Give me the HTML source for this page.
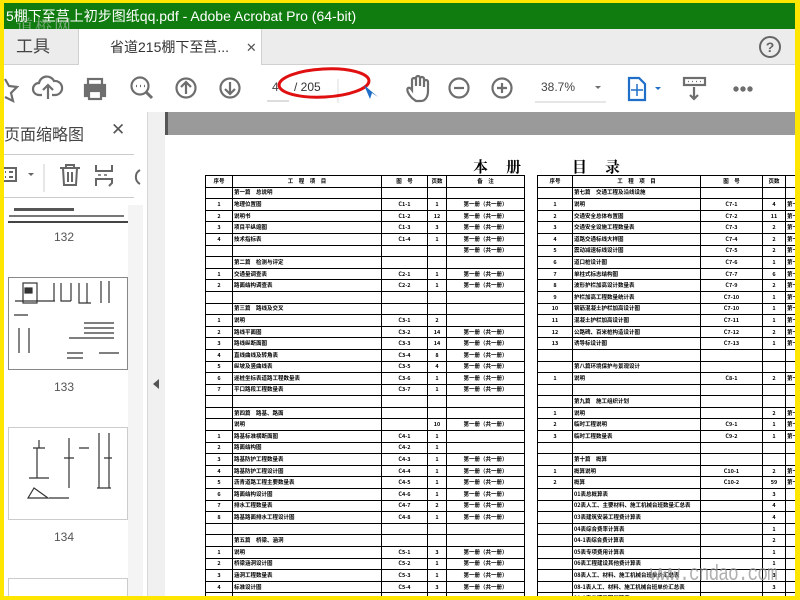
<!DOCTYPE html>
<html><head><meta charset="utf-8"><style>
*{margin:0;padding:0;box-sizing:border-box}
body{width:800px;height:600px;overflow:hidden;background:#ffe600;position:relative;font-family:"Liberation Sans","Noto Sans CJK SC",sans-serif}
.abs{position:absolute}
#title{left:4px;top:3px;width:791px;height:26px;background:#107c10;color:#fff;font-size:14px;line-height:26px;padding-left:2px;white-space:nowrap;overflow:hidden}
#tabs{left:4px;top:29px;width:791px;height:36px;background:#ececec;border-bottom:1px solid #d0d0d0}
#tb{left:4px;top:65px;width:791px;height:47px;background:#fff}
#panel{left:4px;top:112px;width:144px;height:484px;background:#fff;border-right:1px solid #d8d8d8;overflow:hidden}
#gut{left:148px;top:112px;width:17px;height:484px;background:#f0f0f0}
#doc{left:165px;top:112px;width:630px;height:484px;background:#fff;overflow:hidden}
table{border-collapse:collapse;position:absolute;table-layout:fixed;font-family:"Noto Sans CJK SC","Liberation Serif",sans-serif}
td{border:1px solid #000;height:11.6px;font-size:5.5px;line-height:9px;padding:0 1px;white-space:nowrap;overflow:hidden;color:#000;font-weight:bold}
td.c{text-align:center}
tr.h td{text-align:center;font-weight:bold}
svg{position:absolute}
</style></head><body>
<div id="title" class="abs">5棚下至莒上初步图纸qq.pdf - Adobe Acrobat Pro (64-bit)</div>
<div class="abs" style="left:16px;top:12px;color:rgba(200,200,200,.6);font-size:17px;font-family:'Noto Serif CJK SC',serif;letter-spacing:2px">道桥网</div>
<div id="tabs" class="abs">
 <div class="abs" style="left:0;top:0;width:74px;height:36px;font-size:17px;line-height:36px;color:#444;padding-left:12px">工具</div>
 <div class="abs" style="left:74px;top:0;width:184px;height:37px;background:#fff;border-left:1px solid #d0d0d0;border-right:1px solid #d0d0d0;font-size:14px;line-height:36px;color:#333;padding-left:31px">省道215棚下至莒... <span style="margin-left:13px;font-size:13px;color:#555">✕</span></div>
 <div class="abs" style="left:755px;top:7px;width:22px;height:22px;border:2px solid #666;border-radius:50%;text-align:center;font-size:14px;line-height:18px;font-weight:bold;color:#666">?</div>
</div>
<div id="tb" class="abs">
<svg width="791" height="47" fill="none" stroke="#6e6e6e" stroke-width="2.2">
 <path d="M1 14 L5 21 L13 22 L7 28 L9 36 L1 32" />
 <path d="M38 30 h-3 a6 6 0 0 1 0-12 a8 8 0 0 1 15-2 a6 6 0 0 1 2 14 h-4 M44 34 V20 M39 25 l5-5 5 5"/>
 <rect x="84" y="14" width="14" height="6" /><rect x="81" y="20" width="20" height="11" fill="#6e6e6e"/><rect x="85" y="26" width="12" height="8" fill="#fff"/>
 <circle cx="136" cy="21" r="8.5"/><path d="M142 27 l6 6" stroke-width="3"/><path d="M132 21h1 M136 21h1 M140 21h1"/>
 <circle cx="182" cy="23" r="9.5"/><path d="M182 29 V17 M177 22 l5-5 5 5"/>
 <circle cx="226" cy="23" r="9.5"/><path d="M226 17 V29 M221 24 l5 5 5-5"/>
 <path d="M263 36 h22" stroke="#bbb" stroke-width="1"/><path d="M334 14 v24" stroke="#ddd" stroke-width="1"/>
 <path d="M408 33 c-3-3-6-8-4-10 2-1 4 2 4 2 V15 a2 2 0 0 1 4 0 v6 V13 a2 2 0 0 1 4 0 v8 V14 a2 2 0 0 1 4 0 v8 V17 a2 2 0 0 1 4 0 v9 c0 6-3 10-7 10 h-5 z"/>
 <circle cx="455" cy="23" r="9.5"/><path d="M450 23 h10"/>
 <circle cx="498" cy="23" r="9.5"/><path d="M493 23 h10 M498 18 v10"/>
 <path d="M531 37 h71" stroke="#ccc" stroke-width="1"/><path d="M591 21 l3 3 3-3z" fill="#6e6e6e" stroke="none"/>
 <path d="M625 13 h10 l6 6 v16 h-16 z" stroke="#1f6fc8"/><path d="M633 19 v12 M627 25 h12" stroke="#1f6fc8" stroke-width="1.5"/><path d="M651 22 l3 3 3-3z" fill="#1f6fc8" stroke="none"/>
 <rect x="680" y="13" width="21" height="7"/><path d="M690 22 v12 M686 30 l4 4 4-4"/><path d="M684 16.5h1 M688 16.5h1 M692 16.5h1 M696 16.5h1" stroke-width="1.2"/>
 <circle cx="732" cy="24" r="1.6" fill="#6e6e6e"/><circle cx="739" cy="24" r="1.6" fill="#6e6e6e"/><circle cx="746" cy="24" r="1.6" fill="#6e6e6e"/>
 <ellipse cx="320" cy="18" rx="45" ry="14" stroke="#e01010" stroke-width="3" transform="rotate(-3 320 18)"/>
 <path d="M360 20 l6 14 2-6 6 4z" fill="#1f6fc8" stroke="none"/>
</svg>
 <div class="abs" style="left:268px;top:15px;font-size:12px;color:#444">4</div>
 <div class="abs" style="left:290px;top:15px;font-size:12px;color:#333">/ 205</div>
 <div class="abs" style="left:537px;top:15px;font-size:12px;color:#444">38.7%</div>
</div>
<div id="panel" class="abs">
 <div class="abs" style="left:0;top:9px;font-size:16px;color:#444;white-space:nowrap">页面缩略图</div>
 <div class="abs" style="left:107px;top:8px;font-size:17px;color:#555">✕</div>
 <div class="abs" style="left:0;top:42px;width:130px;height:1px;background:#ccc"></div>
 <svg width="144" height="40" style="top:44px" fill="none" stroke="#666" stroke-width="2">
  <rect x="-4" y="12" width="16" height="13"/><path d="M1 16h1 M1 21h1 M5 16h4 M5 21h4"/><path d="M24 17 l3 3 3-3z" fill="#666" stroke="none"/>
  <path d="M40 8 v28" stroke="#ccc" stroke-width="1"/>
  <path d="M56 12 h20 M62 12 v-3 h8 v3 M59 12 l1 17 h12 l1-17 M64 16 v10 M68 16 v10"/>
  <path d="M92 9 v6 h16 v-6 M92 30 v-7 h16 v4 l-3 3" /><path d="M94 19h3 M100 19h3" stroke-width="1.5"/>
  <path d="M136 14 a8 8 0 0 0 0 14"/>
 </svg>
 <div class="abs" style="left:0;top:85px;width:130px;height:1px;background:#ccc"></div>
 <div class="abs" style="left:124px;top:93px;width:15px;height:400px;background:#f4f4f4"></div>
 <div class="abs" style="left:4px;top:93px;width:120px;height:18px;background:#fff;border-bottom:2px solid #444"><div style="margin:3px 6px;height:3px;width:60px;background:#555"></div><div style="margin:4px 1px;height:2px;width:115px;background:#777"></div></div>
 <div class="abs" style="left:50px;top:118px;font-size:12px;color:#555">132</div>
 <div class="abs" style="left:4px;top:165px;width:120px;height:93px;background:#fff;border:1px solid #888">
  <svg width="118" height="91" stroke="#333" fill="none" stroke-width="1.2"><rect x="14" y="5" width="14" height="20"/><rect x="16" y="10" width="7" height="5" fill="#333"/><path d="M6 23h40 M45 5v18 M52 5v18h10 M62 5v18 M70 5v20h12 M78 5v20 M92 3v22 M100 3v22 M5 37h14 M10 50v25 M20 50v25 M60 60h25 M75 45h30 M75 50h30 M75 55h30 M75 60h30 M58 75h16 M58 80h16 M90 75h20"/></svg>
 </div>
 <div class="abs" style="left:50px;top:268px;font-size:12px;color:#555">133</div>
 <div class="abs" style="left:4px;top:315px;width:120px;height:93px;background:#fff;border:1px solid #ccc">
  <svg width="118" height="91" stroke="#333" fill="none" stroke-width="1.2"><path d="M30 12v8 M24 20h12 M28 20v30 M20 50h20 M25 60l-6 10h20z M40 70h20 M60 10v50 M90 5v55 M100 5v55 M88 60h14 M55 30h10 M95 30h8 M70 20h10"/></svg>
 </div>
 <div class="abs" style="left:50px;top:418px;font-size:12px;color:#555">134</div>
 <div class="abs" style="left:4px;top:466px;width:120px;height:30px;background:#fff;border:1px solid #ccc"></div>
</div>
<div id="gut" class="abs"><div class="abs" style="left:5px;top:267px;width:0;height:0;border-top:5px solid transparent;border-bottom:5px solid transparent;border-right:6px solid #555"></div></div>
<div id="doc" class="abs">
 <div class="abs" style="left:0;top:0;width:630px;height:23px;background:#9a9a9a"></div>
 <div class="abs" style="left:0;top:0;width:3px;height:23px;background:#555"></div>
 <div class="abs" style="left:308px;top:44px;font-size:15px;font-weight:bold;font-family:'Noto Serif CJK SC',serif;letter-spacing:18px;white-space:nowrap">本册　目录</div>
 <table style="left:40px;top:63px;width:319px">
 <colgroup><col style="width:27px"><col style="width:149px"><col style="width:46px"><col style="width:19px"><col style="width:78px"></colgroup>
 <tr class="h"><td>序号</td><td>工　程　项　目</td><td>图　号</td><td>页数</td><td>备　注</td></tr>
 <tr><td></td><td>第一篇　总说明</td><td></td><td></td><td></td></tr>
 <tr><td class="c">1</td><td>地理位置图</td><td class="c">C1-1</td><td class="c">1</td><td class="c">第一册（共一册）</td></tr>
 <tr><td class="c">2</td><td>说明书</td><td class="c">C1-2</td><td class="c">12</td><td class="c">第一册（共一册）</td></tr>
 <tr><td class="c">3</td><td>项目平纵缩图</td><td class="c">C1-3</td><td class="c">3</td><td class="c">第一册（共一册）</td></tr>
 <tr><td class="c">4</td><td>技术指标表</td><td class="c">C1-4</td><td class="c">1</td><td class="c">第一册（共一册）</td></tr>
 <tr><td></td><td></td><td></td><td></td><td class="c">第一册（共一册）</td></tr>
 <tr><td></td><td>第二篇　检测与评定</td><td></td><td></td><td></td></tr>
 <tr><td class="c">1</td><td>交通量调查表</td><td class="c">C2-1</td><td class="c">1</td><td class="c">第一册（共一册）</td></tr>
 <tr><td class="c">2</td><td>路面结构调查表</td><td class="c">C2-2</td><td class="c">1</td><td class="c">第一册（共一册）</td></tr>
 <tr><td></td><td></td><td></td><td></td><td></td></tr>
 <tr><td></td><td>第三篇　路线及交叉</td><td></td><td></td><td></td></tr>
 <tr><td class="c">1</td><td>说明</td><td class="c">C3-1</td><td class="c">2</td><td></td></tr>
 <tr><td class="c">2</td><td>路线平面图</td><td class="c">C3-2</td><td class="c">14</td><td class="c">第一册（共一册）</td></tr>
 <tr><td class="c">3</td><td>路线纵断面图</td><td class="c">C3-3</td><td class="c">14</td><td class="c">第一册（共一册）</td></tr>
 <tr><td class="c">4</td><td>直线曲线及转角表</td><td class="c">C3-4</td><td class="c">8</td><td class="c">第一册（共一册）</td></tr>
 <tr><td class="c">5</td><td>纵坡及竖曲线表</td><td class="c">C3-5</td><td class="c">4</td><td class="c">第一册（共一册）</td></tr>
 <tr><td class="c">6</td><td>逐桩坐标表道路工程数量表</td><td class="c">C3-6</td><td class="c">1</td><td class="c">第一册（共一册）</td></tr>
 <tr><td class="c">7</td><td>平口路段工程数量表</td><td class="c">C3-7</td><td class="c">1</td><td class="c">第一册（共一册）</td></tr>
 <tr><td></td><td></td><td></td><td></td><td></td></tr>
 <tr><td></td><td>第四篇　路基、路面</td><td></td><td></td><td></td></tr>
 <tr><td></td><td>说明</td><td></td><td class="c">10</td><td class="c">第一册（共一册）</td></tr>
 <tr><td class="c">1</td><td>路基标准横断面图</td><td class="c">C4-1</td><td class="c">1</td><td></td></tr>
 <tr><td class="c">2</td><td>路面结构图</td><td class="c">C4-2</td><td class="c">1</td><td></td></tr>
 <tr><td class="c">3</td><td>路基防护工程数量表</td><td class="c">C4-3</td><td class="c">1</td><td class="c">第一册（共一册）</td></tr>
 <tr><td class="c">4</td><td>路基防护工程设计图</td><td class="c">C4-4</td><td class="c">1</td><td class="c">第一册（共一册）</td></tr>
 <tr><td class="c">5</td><td>沥青道路工程主要数量表</td><td class="c">C4-5</td><td class="c">1</td><td class="c">第一册（共一册）</td></tr>
 <tr><td class="c">6</td><td>路面结构设计图</td><td class="c">C4-6</td><td class="c">1</td><td class="c">第一册（共一册）</td></tr>
 <tr><td class="c">7</td><td>排水工程数量表</td><td class="c">C4-7</td><td class="c">2</td><td class="c">第一册（共一册）</td></tr>
 <tr><td class="c">8</td><td>路基路面排水工程设计图</td><td class="c">C4-8</td><td class="c">1</td><td class="c">第一册（共一册）</td></tr>
 <tr><td></td><td></td><td></td><td></td><td></td></tr>
 <tr><td></td><td>第五篇　桥梁、涵洞</td><td></td><td></td><td></td></tr>
 <tr><td class="c">1</td><td>说明</td><td class="c">C5-1</td><td class="c">3</td><td class="c">第一册（共一册）</td></tr>
 <tr><td class="c">2</td><td>桥梁涵洞设计图</td><td class="c">C5-2</td><td class="c">1</td><td class="c">第一册（共一册）</td></tr>
 <tr><td class="c">3</td><td>涵洞工程数量表</td><td class="c">C5-3</td><td class="c">1</td><td class="c">第一册（共一册）</td></tr>
 <tr><td class="c">4</td><td>标准设计图</td><td class="c">C5-4</td><td class="c">3</td><td class="c">第一册（共一册）</td></tr>
 <tr><td></td><td></td><td></td><td></td><td></td></tr>
 <tr><td></td><td></td><td></td><td></td><td></td></tr>
 </table>
 <table style="left:372px;top:63px;width:290px">
 <colgroup><col style="width:35px"><col style="width:128px"><col style="width:62px"><col style="width:23px"><col style="width:42px"></colgroup>
 <tr class="h"><td>序号</td><td>工　程　项　目</td><td>图　号</td><td>页数</td><td>备　注</td></tr>
 <tr><td></td><td>第七篇　交通工程及沿线设施</td><td></td><td></td><td></td></tr>
 <tr><td class="c">1</td><td>说明</td><td class="c">C7-1</td><td class="c">4</td><td>第一册</td></tr>
 <tr><td class="c">2</td><td>交通安全总体布置图</td><td class="c">C7-2</td><td class="c">11</td><td>第一册</td></tr>
 <tr><td class="c">3</td><td>交通安全设施工程数量表</td><td class="c">C7-3</td><td class="c">2</td><td>第一册</td></tr>
 <tr><td class="c">4</td><td>道路交通标线大样图</td><td class="c">C7-4</td><td class="c">2</td><td>第一册</td></tr>
 <tr><td class="c">5</td><td>震动减速标线设计图</td><td class="c">C7-5</td><td class="c">2</td><td>第一册</td></tr>
 <tr><td class="c">6</td><td>道口桩设计图</td><td class="c">C7-6</td><td class="c">1</td><td>第一册</td></tr>
 <tr><td class="c">7</td><td>单柱式标志结构图</td><td class="c">C7-7</td><td class="c">6</td><td>第一册</td></tr>
 <tr><td class="c">8</td><td>波形护栏加高设计数量表</td><td class="c">C7-9</td><td class="c">2</td><td>第一册</td></tr>
 <tr><td class="c">9</td><td>护栏加高工程数量统计表</td><td class="c">C7-10</td><td class="c">1</td><td>第一册</td></tr>
 <tr><td class="c">10</td><td>钢筋混凝土护栏加高设计图</td><td class="c">C7-10</td><td class="c">1</td><td>第一册</td></tr>
 <tr><td class="c">11</td><td>混凝土护栏加高设计图</td><td class="c">C7-11</td><td class="c">1</td><td>第一册</td></tr>
 <tr><td class="c">12</td><td>公路碑、百米桩构造设计图</td><td class="c">C7-12</td><td class="c">2</td><td>第一册</td></tr>
 <tr><td class="c">13</td><td>诱导标设计图</td><td class="c">C7-13</td><td class="c">1</td><td>第一册</td></tr>
 <tr><td></td><td></td><td></td><td></td><td></td></tr>
 <tr><td></td><td>第八篇环境保护与景观设计</td><td></td><td></td><td></td></tr>
 <tr><td class="c">1</td><td>说明</td><td class="c">C8-1</td><td class="c">2</td><td>第一册</td></tr>
 <tr><td></td><td></td><td></td><td></td><td></td></tr>
 <tr><td></td><td>第九篇　施工组织计划</td><td></td><td></td><td></td></tr>
 <tr><td class="c">1</td><td>说明</td><td></td><td class="c">2</td><td>第一册</td></tr>
 <tr><td class="c">2</td><td>临时工程说明</td><td class="c">C9-1</td><td class="c">1</td><td>第一册</td></tr>
 <tr><td class="c">3</td><td>临时工程数量表</td><td class="c">C9-2</td><td class="c">1</td><td>第一册</td></tr>
 <tr><td></td><td></td><td></td><td></td><td></td></tr>
 <tr><td></td><td>第十篇　概算</td><td></td><td></td><td></td></tr>
 <tr><td class="c">1</td><td>概算说明</td><td class="c">C10-1</td><td class="c">2</td><td>第一册</td></tr>
 <tr><td class="c">2</td><td>概算</td><td class="c">C10-2</td><td class="c">59</td><td>第一册</td></tr>
 <tr><td></td><td>01表总概算表</td><td></td><td class="c">3</td><td></td></tr>
 <tr><td></td><td>02表人工、主要材料、施工机械台班数量汇总表</td><td></td><td class="c">4</td><td></td></tr>
 <tr><td></td><td>03表建筑安装工程费计算表</td><td></td><td class="c">4</td><td></td></tr>
 <tr><td></td><td>04表综合费率计算表</td><td></td><td class="c">1</td><td></td></tr>
 <tr><td></td><td>04-1表综合费计算表</td><td></td><td class="c">2</td><td></td></tr>
 <tr><td></td><td>05表专项费用计算表</td><td></td><td class="c">1</td><td></td></tr>
 <tr><td></td><td>06表工程建设其他费计算表</td><td></td><td class="c">1</td><td></td></tr>
 <tr><td></td><td>08表人工、材料、施工机械台班单价汇总表</td><td></td><td class="c">3</td><td></td></tr>
 <tr><td></td><td>08-1表人工、材料、施工机械台班单价汇总表</td><td></td><td class="c">3</td><td></td></tr>
 <tr><td></td><td>21-1表分项工程概算表</td><td></td><td class="c">37</td><td></td></tr>
 <tr><td></td><td></td><td></td><td></td><td></td></tr>
 </table>
 <div class="abs" style="left:485px;top:450px;font-size:22px;color:rgba(150,150,150,.75);font-family:'Liberation Mono',monospace;letter-spacing:-1px;transform:scaleX(.8);transform-origin:left">www.cndao.com</div>
</div>
</body></html>
